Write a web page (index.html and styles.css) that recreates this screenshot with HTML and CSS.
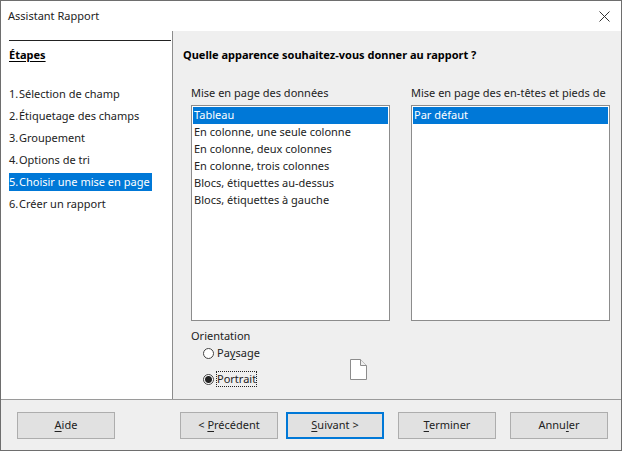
FILE: index.html
```html
<!DOCTYPE html>
<html lang="fr">
<head>
<meta charset="utf-8">
<title>Assistant Rapport</title>
<link rel="stylesheet" href="styles.css">
</head>
<body>
<div class="dialog">
  <header class="titlebar">
    <h1 class="title">Assistant Rapport</h1>
    <button class="close" type="button" aria-label="Fermer">
      <svg width="11" height="11" viewBox="0 0 11 11"><path d="M.5 .5 10.500 10.500M10.500 .5 .5 10.500" fill="none" stroke="#333" stroke-width="1"/></svg>
    </button>
  </header>
  <div class="content">
    <nav class="steps">
      <h2 class="steps-title">Étapes</h2>
      <ol class="step-list">
        <li class="step"><span class="num">1.</span>Sélection de champ</li>
        <li class="step"><span class="num">2.</span>Étiquetage des champs</li>
        <li class="step"><span class="num">3.</span>Groupement</li>
        <li class="step"><span class="num">4.</span>Options de tri</li>
        <li class="step current" aria-current="step"><span class="num">5.</span>Choisir une mise en page</li>
        <li class="step"><span class="num">6.</span>Créer un rapport</li>
      </ol>
    </nav>
    <main class="page">
      <h2 class="question">Quelle apparence souhaitez-vous donner au rapport ?</h2>
      <div class="lists">
        <div class="field">
          <label class="label" for="data-layout">Mise en page des données</label>
          <select class="listbox" id="data-layout" size="6">
            <option selected>Tableau</option>
            <option>En colonne, une seule colonne</option>
            <option>En colonne, deux colonnes</option>
            <option>En colonne, trois colonnes</option>
            <option>Blocs, étiquettes au-dessus</option>
            <option>Blocs, étiquettes à gauche</option>
          </select>
        </div>
        <div class="field">
          <label class="label" for="header-layout">Mise en page des en-têtes et pieds de</label>
          <select class="listbox" id="header-layout" size="6">
            <option selected>Par défaut</option>
          </select>
        </div>
      </div>
      <fieldset class="orientation">
        <legend class="label">Orientation</legend>
        <div class="orientation-row">
          <div class="choices">
            <div class="choice"><input class="radio" type="radio" name="orientation" id="landscape"><label class="choice-label" for="landscape">Pa<u>y</u>sage</label></div>
            <div class="choice"><input class="radio" type="radio" name="orientation" id="portrait" checked><label class="choice-label focused" for="portrait">Portrait</label></div>
          </div>
          <svg class="sheet" width="17" height="21" viewBox="0 0 17 21" aria-hidden="true"><path d="M.5 .5H10.500L16.500 6.500V20.500H.5Z" fill="#fff" stroke="#8c8c8c"/><path d="M10.500 .5V6.500H16.500" fill="#eee" stroke="#8c8c8c"/></svg>
        </div>
      </fieldset>
    </main>
  </div>
  <footer class="footer">
    <button class="button help" type="button"><u>A</u>ide</button>
    <div class="pair">
      <button class="button" type="button">&lt; <u>P</u>récédent</button>
      <button class="button primary" type="button"><u>S</u>uivant &gt;</button>
    </div>
    <button class="button" type="button"><u>T</u>erminer</button>
    <button class="button" type="button">Annu<u>l</u>er</button>
  </footer>
</div>
</body>
</html>
```
FILE: styles.css
```css
* { box-sizing: border-box; }

body {
  margin: 0;
  font: 11px/18px "Noto Sans", "Open Sans", sans-serif;
  color: #222;
}

.dialog {
  display: flex;
  flex-direction: column;
  min-height: 100vh;
  border: 1px solid #6e6e6e;
  background: #efefef;
}

.titlebar {
  display: flex;
  align-items: center;
  justify-content: space-between;
  height: 30px;
  padding: 0 11px 0 7px;
  background: #fff;
}

.title {
  margin: 0;
  font-size: 11px;
  font-weight: 400;
}

.close {
  display: flex;
  padding: 0;
  border: 0;
  background: none;
}

.content {
  display: flex;
  flex: 1;
}

.steps {
  flex: 0 0 172px;
  padding: 9px 1px 0 8px;
  border-right: 1px solid #8c8c8c;
  background: #fff;
}

.steps-title {
  margin: 0;
  padding-top: 5px;
  border-top: 1px solid #222;
  font-size: 11px;
  line-height: 18px;
  color: #000;
  text-decoration: underline;
  text-underline-offset: 2px;
}

.step-list {
  display: flex;
  flex-direction: column;
  align-items: flex-start;
  gap: 4px;
  margin: 21px 0 0;
  padding: 0;
  list-style: none;
}

.step {
  display: flex;
  padding-right: 2px;
  white-space: nowrap;
}

.num { width: 10px; }

.current {
  background: #0078d7;
  color: #fff;
}

.page {
  display: flex;
  flex: 1;
  flex-direction: column;
  min-width: 0;
  padding: 15px 11px 12px 10px;
}

.question {
  margin: 0;
  font-size: 11px;
  line-height: 18px;
  color: #000;
}

.lists {
  display: grid;
  flex: 1;
  grid-template-columns: minmax(0, 1fr) minmax(0, 1fr);
  gap: 21px;
  margin: 20px 0 6px;
  padding-left: 8px;
}

.field {
  display: flex;
  flex-direction: column;
  gap: 3px;
}

.label {
  padding: 0;
  overflow: hidden;
  white-space: nowrap;
}

.listbox {
  flex: 1;
  width: 100%;
  padding: 1px;
  border: 1px solid #8c8c8c;
  border-radius: 0;
  outline: 0;
  overflow: hidden;
  background: #fff;
  font: inherit;
  color: #222;
}

.listbox option {
  min-height: 17px;
  padding: 0 1px;
  line-height: 17px;
}

.listbox option:checked {
  background: #0078d7 linear-gradient(#0078d7, #0078d7);
  color: #fff;
}

.orientation {
  min-width: 0;
  margin: 0;
  padding: 0 0 0 8px;
  border: 0;
}

.orientation-row {
  display: flex;
  align-items: flex-end;
}

.choices {
  display: flex;
  flex: 0 0 159px;
  flex-direction: column;
  gap: 10px;
  padding-left: 12px;
}

.choice {
  display: flex;
  align-items: center;
  gap: 2px;
}

.radio {
  width: 11px;
  height: 11px;
  margin: 0;
  border: 1px solid #444;
  border-radius: 50%;
  appearance: none;
  background: #fff;
}

.radio:checked { background: radial-gradient(circle, #222 3px, #fff 4px); }

.choice-label {
  border: 1px solid transparent;
  line-height: 14px;
}

.focused { border: 1px dotted #222; }

.sheet { margin-bottom: 7px; }

.footer {
  display: flex;
  align-items: center;
  gap: 14px;
  height: 51px;
  padding: 0 13px 0 16px;
  border-top: 1px solid #9a9a9a;
}

.pair {
  display: flex;
  gap: 8px;
}

.button {
  width: 98px;
  height: 27px;
  padding: 0;
  border: 1px solid #adadad;
  background: #e1e1e1;
  font: inherit;
  color: #222;
}

.primary { border: 2px solid #0078d7; }

.help { margin-right: auto; }

u { text-underline-offset: 2px; }
```
